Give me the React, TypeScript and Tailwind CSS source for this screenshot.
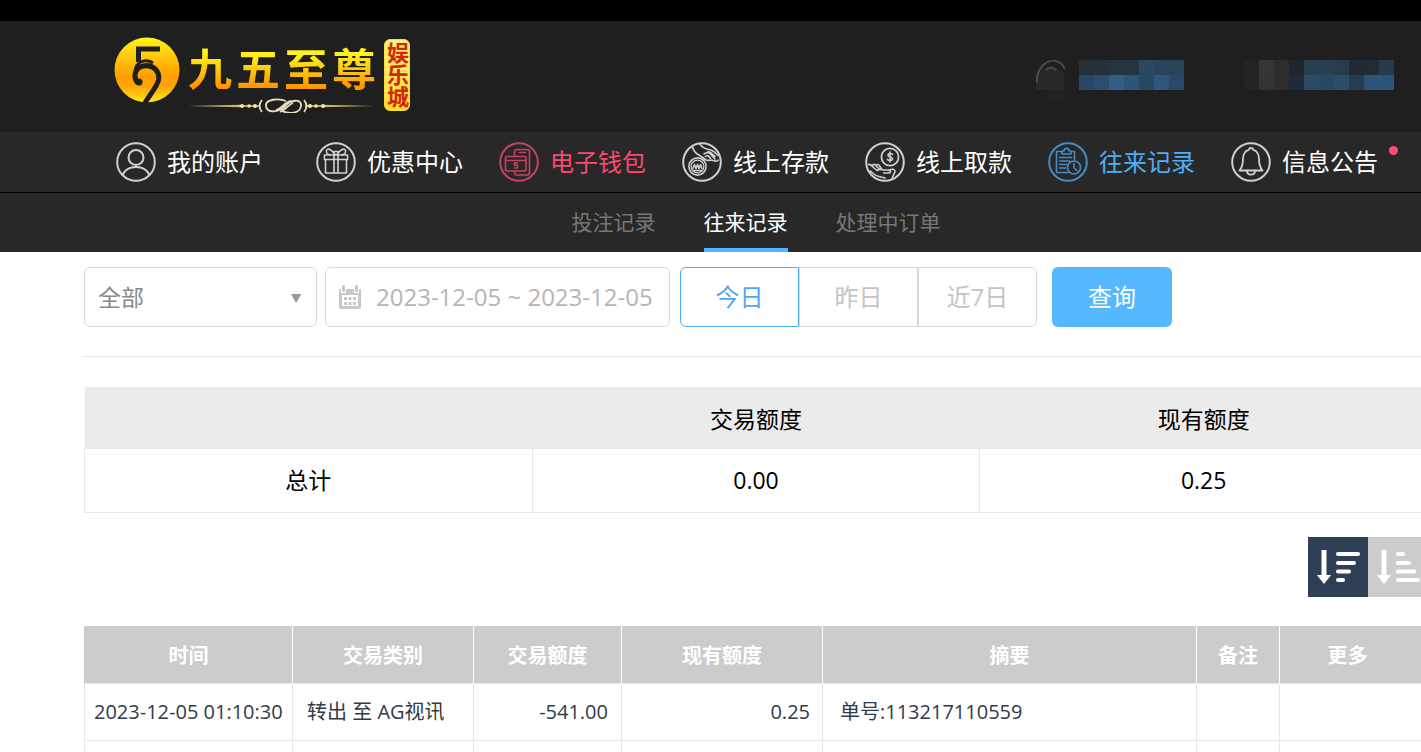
import React, { useState } from 'react';
import clsx from 'clsx';

interface NavItem {
  label: string;
  icon: React.ReactNode;
  color?: string;
  dot?: boolean;
}

const Ring = ({ children }: { children: React.ReactNode }) => (
  <svg
    viewBox="0 0 40 40"
    className="size-10 shrink-0"
    fill="none"
    stroke="currentColor"
    strokeWidth="1.6"
    strokeLinecap="round"
    strokeLinejoin="round"
    aria-hidden="true"
  >
    <circle cx="20" cy="20" r="18.8" strokeWidth="2" />
    {children}
  </svg>
);

const UserIcon = () => (
  <Ring>
    <circle cx="20" cy="15.5" r="7.5" strokeWidth="2" />
    <path d="M6.5 33C9 27.5 14 25 20 25s11 2.5 13.5 8" strokeWidth="2" />
  </Ring>
);

const GiftIcon = () => (
  <Ring>
    <path d="M8.5 13h23v4.5h-23zM9.5 17.5h21V31h-21zM18 13v18M22 13v18" />
    <path d="M18.500 12.500C16 7.500 11.500 5.500 10.500 8.500c-.8 2.500 1.500 4 3.500 4.300M21.500 12.500C24 7.500 28.500 5.500 29.500 8.500c.8 2.500-1.500 4-3.500 4.300M18 9.500h4v3h-4z" />
  </Ring>
);

const WalletIcon = () => (
  <Ring>
    <path d="M15.5 14V10A2.5 2.5 0 0 1 18 7.500h10a2.500 2.500 0 0 1 2.500 2.500v20.500A2.500 2.500 0 0 1 28 33H18a2.500 2.500 0 0 1-2.500-2.500V29M20.500 10.500h6" />
    <rect x="6.5" y="14.5" width="20.5" height="14.5" rx="1.5" />
    <path d="M6.500 18.500H27M18.500 21h-3v2.300h3v2.700h-3" />
  </Ring>
);

const DepositIcon = () => (
  <Ring>
    <circle cx="15.5" cy="24.5" r="8.6" />
    <circle cx="15.5" cy="24.5" r="6.4" strokeWidth="1.2" />
    <path d="M11 26.500l1.500-4 1.500 4 1.500-4 1.500 4 1.500-4 1.500 4M12 28.500h7" />
    <path d="M10.500 5c1 4 3 6.500 6.500 8l7 5c3 1 5-.5 7 .5 2 .8 4 1 5.500-.5M18 2.500c3 3.500 5 4.500 9 5 4 .5 6 3 9 6" />
    <path d="M22 12c2-1.500 4-2 6-.5l5 5.500M23.500 14.500c2-1.500 3-1 5 2M26 9.500c3 .5 5 3 7 5" />
  </Ring>
);

const WithdrawIcon = () => (
  <Ring>
    <circle cx="25" cy="15" r="8.6" strokeWidth="1.8" />
    <path d="M27.500 12.500c-.5-1.500-4.500-1.500-4.500.7 0 2.300 4.500 1.300 4.500 3.600 0 2.200-4.500 2.200-5 .4M25 10v10" />
    <path d="M3.500 22.500c2-.5 3.500 1 5 3l3.500 3c2-1.500 4-1.500 6.500-.5h6c2 1 1 3-1 3h-5M24 28.500c3-2 6-1.500 6 1-.5 2-2 4-3 7M5 29c3 2 5 5 9 5.500l6 1.500" />
    <path d="M7.500 23.500c1.500-2 3-1 4 1l3 2.500M11.500 23c1.500-1.500 3 .5 5 4" />
  </Ring>
);

const RecordIcon = () => (
  <Ring>
    <path d="M14 9.500H8.500v21H20M23 9.500h3.500V18M14 9h2c0-3.500 5-3.500 5 0h2v3h-9z" />
    <path d="M11.500 15.500h12M11.500 19h10M11.500 22.500h7M11.500 26h6" />
    <circle cx="26" cy="25.5" r="6.5" />
    <path d="M26 21.500V26l3 2.500" />
  </Ring>
);

const BellIcon = () => (
  <Ring>
    <path
      d="M20 6c-1.500 0-2 .8-2.300 1.800C13.500 9 12 12.500 12 17c0 5-1 8.500-3.500 11.500h23C29 25.500 28 22 28 17c0-4.500-1.500-8-5.700-9.200C22 6.800 21.500 6 20 6z"
      strokeWidth="1.8"
    />
    <path d="M16 28.500c0 5.500 8 5.500 8 0" strokeWidth="1.8" />
  </Ring>
);

const navItems: NavItem[] = [
  { label: '我的账户', icon: <UserIcon /> },
  { label: '优惠中心', icon: <GiftIcon /> },
  { label: '电子钱包', icon: <WalletIcon />, color: 'text-[#fb4a70]' },
  { label: '线上存款', icon: <DepositIcon /> },
  { label: '线上取款', icon: <WithdrawIcon /> },
  { label: '往来记录', icon: <RecordIcon />, color: 'text-[#52adf5]' },
  { label: '信息公告', icon: <BellIcon />, dot: true },
];

const subTabs = ['投注记录', '往来记录', '处理中订单'];
const ranges = ['今日', '昨日', '近7日'];

const columns = [
  { label: '时间', width: 'w-[208px]' },
  { label: '交易类别', width: 'w-[181px]' },
  { label: '交易额度', width: 'w-[148px]' },
  { label: '现有额度', width: 'w-[201px]' },
  { label: '摘要', width: 'w-[374px]' },
  { label: '备注', width: 'w-[83px]' },
  { label: '更多', width: 'pr-3' },
];

const Logo = () => (
  <a href="#" className="flex items-start gap-2">
    <svg viewBox="0 0 66 66" className="size-[66px]" aria-hidden="true">
      <defs>
        <linearGradient id="gold" x1="0" y1="0" x2="0" y2="1">
          <stop offset="0" stopColor="#fff21a" />
          <stop offset="0.6" stopColor="#ff9d00" />
          <stop offset="0.75" stopColor="#ffa408" />
          <stop offset="1" stopColor="#ffe61a" />
        </linearGradient>
      </defs>
      <circle cx="33" cy="33" r="32.5" fill="url(#gold)" />
      <g fill="none" stroke="#1f1f1f">
        <path d="M46 12H24.500v13" strokeWidth="5" />
        <path d="M24 46c-5-5-4-15 5-17 10-2 17 5 15.500 14C43 50 36 57 31 66" strokeWidth="5" />
        <path d="M21 34c1-9 10-13 18-8" strokeWidth="3" />
      </g>
      <circle cx="25" cy="45" r="3.5" fill="#1f1f1f" />
    </svg>
    <div className="flex flex-col pt-2">
      <div className="flex gap-1 text-[44px] leading-[48px] font-bold">
        {['九', '五', '至', '尊'].map((char) => (
          <span key={char} className="bg-linear-to-b from-[#fff21a] from-20% to-[#ff9800] to-85% bg-clip-text text-transparent">
            {char}
          </span>
        ))}
      </div>
      <svg viewBox="0 0 188 20" className="h-5 w-[188px]" fill="none" aria-hidden="true">
        <path d="M0 13l52-1.200v2.400zM186 13l-52-1.200v2.400z" fill="#c9b26a" />
        <path d="M50 13h22M117 13h20" stroke="#e5cf87" strokeWidth="1.5" />
        <g fill="#ffe9a0">
          <circle cx="54" cy="13" r="2" />
          <circle cx="61" cy="13" r="1.8" />
          <circle cx="67" cy="13" r="2" />
          <circle cx="122" cy="13" r="2" />
          <circle cx="128" cy="13" r="1.8" />
          <circle cx="135" cy="13" r="2" />
        </g>
        <path
          d="M74 7q-5 6 0 12M116 7q5 6 0 12M98 8c-7-3-21-2-20 5 1 8 14 6 19 0s17-8 16 0-12 8-19 5M88 17c5-1 9-8 15-9M92 19c5-2 8-7 13-9"
          stroke="#e9dfbd"
          strokeWidth="1.8"
        />
      </svg>
    </div>
    <div className="mt-[2px] flex h-[72px] w-[26px] items-center justify-center rounded-md border border-[#ffd83a] bg-linear-to-b from-[#fff27a] to-[#ffe11e] text-[22px] leading-6 font-bold text-[#d3240c] [writing-mode:vertical-rl]">
      娱乐城
    </div>
  </a>
);

// Masked account name and balance: [x, y, fill]
const maskCells: [number, number, string][] = [
  [43, 0, '#25313a'], [58, 0, '#25303a'], [73, 0, '#263440'], [88, 0, '#263440'],
  [103, 0, '#2a4860'], [118, 0, '#28435a'], [133, 0, '#28435a'],
  [43, 15, '#2a4864'], [58, 15, '#2d4c70'], [73, 15, '#315d89'], [88, 15, '#2b557a'],
  [103, 15, '#294864'], [118, 15, '#2d587d'], [133, 15, '#29486a'],
  [208, 0, '#232323'], [223, 0, '#353535'], [238, 0, '#2d2d2d'], [253, 0, '#20262e'],
  [268, 0, '#283f50'], [283, 0, '#283f50'], [298, 0, '#273d4e'], [313, 0, '#222a34'],
  [328, 0, '#222c36'], [343, 0, '#263b4d'],
  [208, 15, '#242424'], [223, 15, '#343434'], [238, 15, '#2d2d2d'], [253, 15, '#202a38'],
  [268, 15, '#2a4a66'], [283, 15, '#2a4864'], [298, 15, '#2a4d6c'], [313, 15, '#263c51'],
  [328, 15, '#2c5378'], [343, 15, '#2c5378'],
];

const AccountMask = () => (
  <svg viewBox="0 0 361 44" className="h-11 w-[361px]" aria-hidden="true">
    <path d="M0 14l8-6h12l8 6v16H0z" fill="#282828" />
    <path d="M13 30h15v12H13z" fill="#232323" />
    <path d="M1 23C-1 3 21-8 29 9M10 10q5-5 10 0" fill="none" stroke="#4a4a4a" strokeWidth="2" />
    {maskCells.map(([x, y, fill]) => (
      <rect key={`${x}-${y}`} x={x} y={y} width="15" height="15" fill={fill} />
    ))}
  </svg>
);

const CalendarIcon = () => (
  <svg viewBox="0 0 24 26" className="h-[26px] w-6 shrink-0" fill="#c8c8c8" aria-hidden="true">
    <path d="M1 5h22v18a2 2 0 0 1-2 2H3a2 2 0 0 1-2-2z" />
    <path d="M4 11h16v11H4zM3 1h5v8H3zM16 1h5v8h-5z" fill="#fff" />
    <rect x="4" y="1" width="3" height="7" rx="1" />
    <rect x="17" y="1" width="3" height="7" rx="1" />
    <path d="M6 13h3v3H6zM10.5 13h3v3h-3zM15 13h3v3h-3zM6 18h3v3H6zM10.5 18h3v3h-3zM15 18h3v3h-3z" />
  </svg>
);

const SortIcon = ({ ascending = false }: { ascending?: boolean }) => (
  <svg viewBox="0 0 60 60" className="size-[60px]" stroke="#fff" aria-hidden="true">
    <path d="M16 13v26" strokeWidth="5" />
    <path d="M9 38h14l-7 9z" fill="#fff" stroke="none" />
    <path
      d={ascending ? 'M30 17h5M30 26h11M30 34.500h16M30 43h20' : 'M30 17h20M30 26h16M30 34.500h11M30 43h5'}
      strokeWidth="4"
      strokeLinecap="round"
    />
  </svg>
);

export default function App() {
  const [tab, setTab] = useState('往来记录');
  const [range, setRange] = useState('今日');
  const [type, setType] = useState('全部');
  const [dates, setDates] = useState('2023-12-05 ~ 2023-12-05');
  const [ascending, setAscending] = useState(false);

  return (
    <div className="h-screen overflow-hidden bg-white font-['Open_Sans','Noto_Sans_CJK_SC',sans-serif]">
      <div className="min-w-[1512px]">
        {/* Header */}
        <header className="border-t-[21px] border-black bg-[#1f1f1f]">
          <div className="flex h-[111px] items-start pt-4 pl-[114px]">
            <Logo />
            <div className="ml-[626px] pt-[23px]">
              <AccountMask />
            </div>
          </div>
        </header>

        {/* Main navigation */}
        <nav className="flex h-[61px] items-center gap-9 border-b border-black bg-[#282828] pl-[116px]">
          {navItems.map((item) => (
            <a
              key={item.label}
              href="#"
              className={clsx(
                'relative flex items-center gap-[11px] text-[24px] leading-8 whitespace-nowrap first:mr-[17px]',
                item.color ?? 'text-white',
              )}
            >
              <span className={item.color ? 'opacity-75' : 'text-[#d0d0d0]'}>{item.icon}</span>
              {item.label}
              {item.dot && <span className="absolute top-1 -right-5 size-[9px] rounded-full bg-[#ff4d73]" />}
            </a>
          ))}
        </nav>

        {/* Sub navigation */}
        <div className="flex h-[59px] justify-center gap-12 bg-[#282828]">
          {subTabs.map((label) => (
            <button
              key={label}
              onClick={() => setTab(label)}
              className={clsx(
                'border-y-4 border-t-transparent text-[21px]',
                tab === label ? 'border-b-[#52b5ff] text-white' : 'border-b-transparent text-[#777]',
              )}
            >
              {label}
            </button>
          ))}
        </div>

        <main className="px-[84px] pt-[15px]">
          {/* Filters */}
          <form className="flex border-b border-[#e8e8e8] pb-[29px]" onSubmit={(e) => e.preventDefault()}>
            <div className="relative mr-2">
              <select
                aria-label="交易类别"
                value={type}
                onChange={(e) => setType(e.target.value)}
                className="h-[60px] w-[233px] appearance-none rounded-md border border-[#d9d9d9] bg-white px-[13px] text-[23px] text-[#888]"
              >
                <option>全部</option>
              </select>
              <svg viewBox="0 0 12 10" className="pointer-events-none absolute top-[26px] right-[15px] h-[10px] w-3" aria-hidden="true">
                <path d="M1 1h10.500L6 10z" fill="#999" />
              </svg>
            </div>
            <label className="mr-[10px] flex h-[60px] w-[345px] items-center gap-[14px] rounded-md border border-[#d9d9d9] pl-3">
              <CalendarIcon />
              <input
                aria-label="日期"
                value={dates}
                onChange={(e) => setDates(e.target.value)}
                className="w-full min-w-0 text-[24px] text-[#b5b5b5] outline-none"
              />
            </label>
            <div className="mr-[15px] flex">
              {ranges.map((label) => (
                <button
                  key={label}
                  type="button"
                  onClick={() => setRange(label)}
                  className={clsx(
                    'h-[60px] w-[119px] border text-[24px] first:rounded-l-md last:rounded-r-md',
                    range === label ? 'border-[#52adee] text-[#52a5f0]' : 'border-[#d9d9d9] text-[#c4c4c4]',
                  )}
                >
                  {label}
                </button>
              ))}
            </div>
            <button type="submit" className="h-[60px] w-[120px] rounded-md bg-[#55b8ff] text-[24px] text-white">
              查询
            </button>
          </form>

          {/* Totals */}
          <table className="mt-[30px] w-full table-fixed border-collapse text-center text-[23px] text-black">
            <thead>
              <tr className="h-[61px] bg-[#ebebeb]">
                <th aria-label="项目" />
                <th className="pt-1 font-normal">交易额度</th>
                <th className="pt-1 font-normal">现有额度</th>
              </tr>
            </thead>
            <tbody>
              <tr className="h-16">
                <td className="border border-[#e8e8e8]">总计</td>
                <td className="border border-[#e8e8e8]">0.00</td>
                <td className="border border-[#e8e8e8]">0.25</td>
              </tr>
            </tbody>
          </table>

          <div className="mt-6 flex justify-end">
            <button aria-label="降序" onClick={() => setAscending(false)} className={ascending ? 'bg-[#ccc]' : 'bg-[#2f4056]'}>
              <SortIcon />
            </button>
            <button aria-label="升序" onClick={() => setAscending(true)} className={ascending ? 'bg-[#2f4056]' : 'bg-[#ccc]'}>
              <SortIcon ascending />
            </button>
          </div>

          {/* Records */}
          <table className="mt-[29px] w-full table-fixed border-collapse text-[20px] text-[#2f3b48]">
            <thead>
              <tr className="h-[58px] bg-[#ccc] text-white">
                {columns.map((col) => (
                  <th key={col.label} className={clsx('border-x border-white pt-1 font-bold first:border-l-[#ccc]', col.width)}>
                    {col.label}
                  </th>
                ))}
              </tr>
            </thead>
            <tbody className="[&_td]:border [&_td]:border-[#e8e8e8] [&_td]:whitespace-nowrap">
              <tr className="h-[57px]">
                <td className="pl-[9px]">2023-12-05 01:10:30</td>
                <td className="pl-[14px]">转出 至 AG视讯</td>
                <td className="pr-[13px] text-right">-541.00</td>
                <td className="pr-3 text-right">0.25</td>
                <td className="pl-[17px]">单号:113217110559</td>
                <td />
                <td />
              </tr>
              <tr className="h-[57px]">
                {columns.map((col) => (
                  <td key={col.label} />
                ))}
              </tr>
            </tbody>
          </table>
        </main>
      </div>
    </div>
  );
}
